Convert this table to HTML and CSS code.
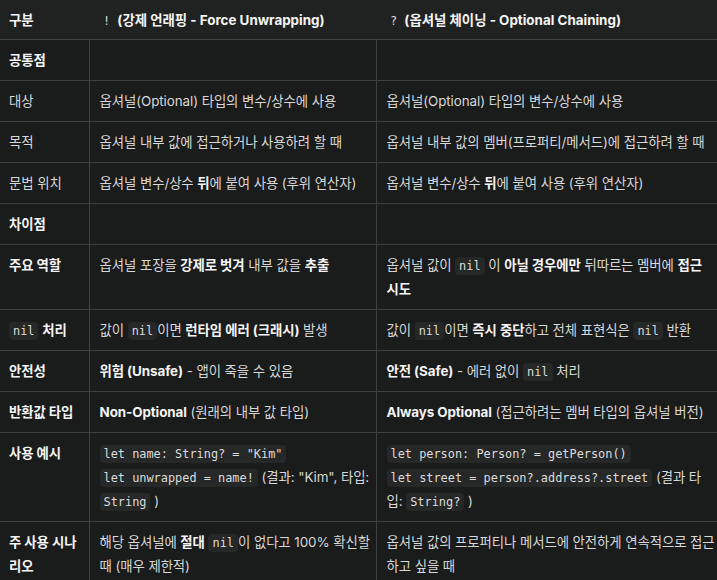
FILE: index.html
```html
<!DOCTYPE html>
<html lang="ko">
<head>
<meta charset="utf-8">
<link rel="stylesheet" href="styles.css">
</head>
<body>
<table class="cmp">
  <colgroup><col class="c1"><col class="c2"><col class="c3"></colgroup>
  <thead>
    <tr>
      <th>구분</th>
      <th><code>!</code> (강제 언래핑 - Force Unwrapping)</th>
      <th><code>?</code> (옵셔널 체이닝 - Optional Chaining)</th>
    </tr>
  </thead>
  <tbody>
    <tr><td><b>공통점</b></td><td></td><td></td></tr>
    <tr><td>대상</td><td>옵셔널(Optional) 타입의 변수/상수에 사용</td><td>옵셔널(Optional) 타입의 변수/상수에 사용</td></tr>
    <tr><td>목적</td><td>옵셔널 내부 값에 접근하거나 사용하려 할 때</td><td>옵셔널 내부 값의 멤버(프로퍼티/메서드)에 접근하려 할 때</td></tr>
    <tr><td>문법 위치</td><td>옵셔널 변수/상수 <b>뒤</b>에 붙여 사용 (후위 연산자)</td><td>옵셔널 변수/상수 <b>뒤</b>에 붙여 사용 (후위 연산자)</td></tr>
    <tr><td><b>차이점</b></td><td></td><td></td></tr>
    <tr><td><b>주요 역할</b></td><td>옵셔널 포장을 <b>강제로 벗겨</b> 내부 값을 <b>추출</b></td><td>옵셔널 값이 <code>nil</code> 이 <b>아닐 경우에만</b> 뒤따르는 멤버에 <b>접근 시도</b></td></tr>
    <tr><td><code>nil</code> <b>처리</b></td><td>값이 <code>nil</code>이면 <b>런타임 에러 (크래시)</b> 발생</td><td>값이 <code>nil</code>이면 <b>즉시 중단</b>하고 전체 표현식은 <code>nil</code> 반환</td></tr>
    <tr><td><b>안전성</b></td><td><b>위험 (Unsafe)</b> - 앱이 죽을 수 있음</td><td><b>안전 (Safe)</b> - 에러 없이 <code>nil</code> 처리</td></tr>
    <tr><td><b>반환값 타입</b></td><td><b>Non-Optional</b> (원래의 내부 값 타입)</td><td><b>Always Optional</b> (접근하려는 멤버 타입의 옵셔널 버전)</td></tr>
    <tr><td><b>사용 예시</b></td><td><code>let name: String? = "Kim"</code><br><code>let unwrapped = name!</code> (결과: "Kim", 타입: <code>String</code> )</td><td><code>let person: Person? = getPerson()</code><br><code>let street = person?.address?.street</code> (결과 타입: <code>String?</code> )</td></tr>
    <tr><td><b>주 사용 시나리오</b></td><td>해당 옵셔널에 <b>절대</b> <code>nil</code>이 없다고 100% 확신할 때 (매우 제한적)</td><td>옵셔널 값의 프로퍼티나 메서드에 안전하게 연속적으로 접근하고 싶을 때</td></tr>
  </tbody>
</table>
</body>
</html>
```

FILE: styles.css
```css
html, body {
  margin: 0;
  background: #1a1b1b;
}
body {
  font-family: Inter, "Noto Sans CJK KR", sans-serif;
  font-size: 13.4px;
  color: #d8d8d8;
}
.cmp {
  border-collapse: collapse;
  table-layout: fixed;
  width: 717px;
}
.c1 { width: 89px; }
.c2 { width: 287px; }
.c3 { width: 341px; }
.cmp th {
  background: #202222;
  color: #f4f4f4;
  font-weight: 700;
  text-align: left;
  padding: 8px 9px 7px 9px;
  line-height: 24px;
  border-bottom: 1px solid #444;
  vertical-align: top;
}
.cmp td {
  padding: 8px 9px 8px 9px;
  line-height: 24px;
  letter-spacing: -0.08px;
  border-bottom: 1px solid #3e3e3e;
  vertical-align: top;
}
.cmp td + td {
  border-left: 1px solid #3e3e3e;
  padding-left: 10px;
  padding-right: 0;
}
.cmp th + th { padding-left: 10px; }
b { color: #f4f4f4; font-weight: 700; }
code {
  font-family: "DejaVu Sans Mono", monospace;
  font-size: 11.9px;
  line-height: 1;
  letter-spacing: 0;
  background: #262727;
  border-radius: 4px;
  padding: 2px 4px;
  color: #dcdcdc;
}
th code { background: transparent; font-weight: 400; }
```
